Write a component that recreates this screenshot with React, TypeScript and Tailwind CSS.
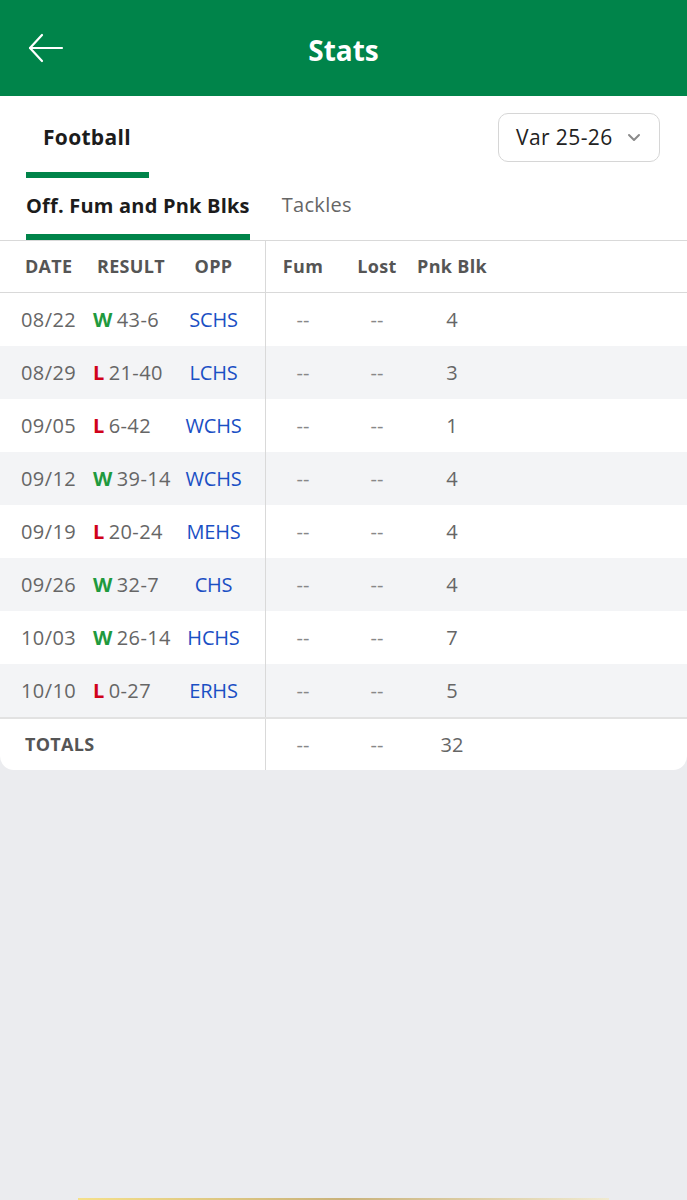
import React from "react";

type Row = { date: string; wl: "W" | "L"; score: string; opp: string; fum: string; lost: string; pnk: string };

const rows: Row[] = [
  { date: "08/22", wl: "W", score: "43-6", opp: "SCHS", fum: "--", lost: "--", pnk: "4" },
  { date: "08/29", wl: "L", score: "21-40", opp: "LCHS", fum: "--", lost: "--", pnk: "3" },
  { date: "09/05", wl: "L", score: "6-42", opp: "WCHS", fum: "--", lost: "--", pnk: "1" },
  { date: "09/12", wl: "W", score: "39-14", opp: "WCHS", fum: "--", lost: "--", pnk: "4" },
  { date: "09/19", wl: "L", score: "20-24", opp: "MEHS", fum: "--", lost: "--", pnk: "4" },
  { date: "09/26", wl: "W", score: "32-7", opp: "CHS", fum: "--", lost: "--", pnk: "4" },
  { date: "10/03", wl: "W", score: "26-14", opp: "HCHS", fum: "--", lost: "--", pnk: "7" },
  { date: "10/10", wl: "L", score: "0-27", opp: "ERHS", fum: "--", lost: "--", pnk: "5" },
];

export default function App() {
  return (
    <div
      className="min-h-[1200px] w-[687px] bg-[#ebecef] flex flex-col"
      style={{ fontFamily: '"Open Sans", "Noto Sans", sans-serif' }}
    >
      {/* Header */}
      <div className="h-[96px] bg-[#00844a] flex items-center px-[28px]">
        <svg width="36" height="30" viewBox="0 0 36 30" fill="none" stroke="white" strokeWidth="2.2" strokeLinecap="round" strokeLinejoin="round">
          <path d="M34 15H2" />
          <path d="M14 2L2 15L14 28" />
        </svg>
        <div className="flex-1 text-center text-white font-bold text-[28px] pr-[36px] pt-[4px]">Stats</div>
      </div>

      {/* Card */}
      <div className="bg-white rounded-b-[14px]">
        {/* Top tabs */}
        <div className="flex items-start justify-between pr-[27px]">
          <div className="ml-[26px] flex flex-col">
            <div className="h-[76px] pt-[8px] flex items-center px-[17px] text-[21px] font-bold text-[#1c1c1c] tracking-[0.3px] whitespace-nowrap">Football</div>
            <div className="h-[6px] w-[123px] bg-[#00844a]" />
          </div>
          <div className="mt-[17px] h-[49px] w-[162px] rounded-[10px] border border-[#d6d6d6] flex items-center pl-[17px] pr-[18px] justify-between">
            <span className="text-[21px] text-[#222] tracking-[0.4px] whitespace-nowrap">Var 25-26</span>
            <svg width="14" height="9" viewBox="0 0 14 9" fill="none" stroke="#8a8a8a" strokeWidth="2" strokeLinecap="round" strokeLinejoin="round">
              <path d="M2 2L7 7L12 2" />
            </svg>
          </div>
        </div>

        {/* Sub tabs */}
        <div className="flex items-end gap-[32px] pl-[26px] h-[62px]">
          <div className="flex flex-col">
            <div className="h-[56px] flex items-center text-[20px] font-bold text-[#1c1c1c] tracking-[0.2px] whitespace-nowrap">Off. Fum and Pnk Blks</div>
            <div className="h-[6px] bg-[#00844a]" />
          </div>
          <div className="h-[62px] pb-[8px] flex items-center text-[20px] text-[#666] tracking-[0.3px]">Tackles</div>
        </div>

        {/* Table */}
        <div className="border-t border-[#d9d9d9]">
          {/* Header row */}
          <div className="flex h-[52px] border-b border-[#d9d9d9] text-[18px] font-bold text-[#555] tracking-[0.3px]">
            <div className="w-[266px] flex items-center border-r border-[#d9d9d9]">
              <div className="w-[72px] pl-[25px]">DATE</div>
              <div className="w-[90px] pl-[25px]">RESULT</div>
              <div className="flex-1 text-center">OPP</div>
            </div>
            <div className="w-[74px] flex items-center justify-center">Fum</div>
            <div className="w-[74px] flex items-center justify-center">Lost</div>
            <div className="w-[76px] flex items-center justify-center whitespace-nowrap">Pnk Blk</div>
          </div>

          {rows.map((r, i) => (
            <div key={i} className={`flex h-[53px] text-[20px] ${i % 2 === 1 ? "bg-[#f3f4f6]" : "bg-white"}`}>
              <div className="w-[266px] flex items-center border-r border-[#d9d9d9]">
                <div className="w-[72px] pl-[21px] text-[#666] tracking-[0.4px] whitespace-nowrap">{r.date}</div>
                <div className="w-[90px] pl-[21px] flex items-center gap-[4px] text-[#666] tracking-[0.4px] whitespace-nowrap">
                  <span className={`font-bold ${r.wl === "W" ? "text-[#1f9a3e]" : "text-[#d0021b]"}`}>{r.wl}</span>
                  <span>{r.score}</span>
                </div>
                <div className="flex-1 text-center text-[#1a4fc4] tracking-[-0.2px]">{r.opp}</div>
              </div>
              <div className="w-[74px] flex items-center justify-center text-[#888]">{r.fum}</div>
              <div className="w-[74px] flex items-center justify-center text-[#888]">{r.lost}</div>
              <div className="w-[76px] flex items-center justify-center text-[#666]">{r.pnk}</div>
            </div>
          ))}

          {/* Totals */}
          <div className="flex h-[53px] border-t-2 border-[#e2e2e2]">
            <div className="w-[266px] flex items-center border-r border-[#d9d9d9] pl-[25px] text-[18px] font-bold text-[#555] tracking-[0.3px]">
              TOTALS
            </div>
            <div className="w-[74px] flex items-center justify-center text-[20px] text-[#888]">--</div>
            <div className="w-[74px] flex items-center justify-center text-[20px] text-[#888]">--</div>
            <div className="w-[76px] flex items-center justify-center text-[20px] text-[#666]">32</div>
          </div>
        </div>
      </div>

      <div className="mt-auto mx-[78px] h-[2px] bg-gradient-to-r from-[#f5e08a] via-[#c9b27a] to-[#f0ead0]" />
    </div>
  );
}
